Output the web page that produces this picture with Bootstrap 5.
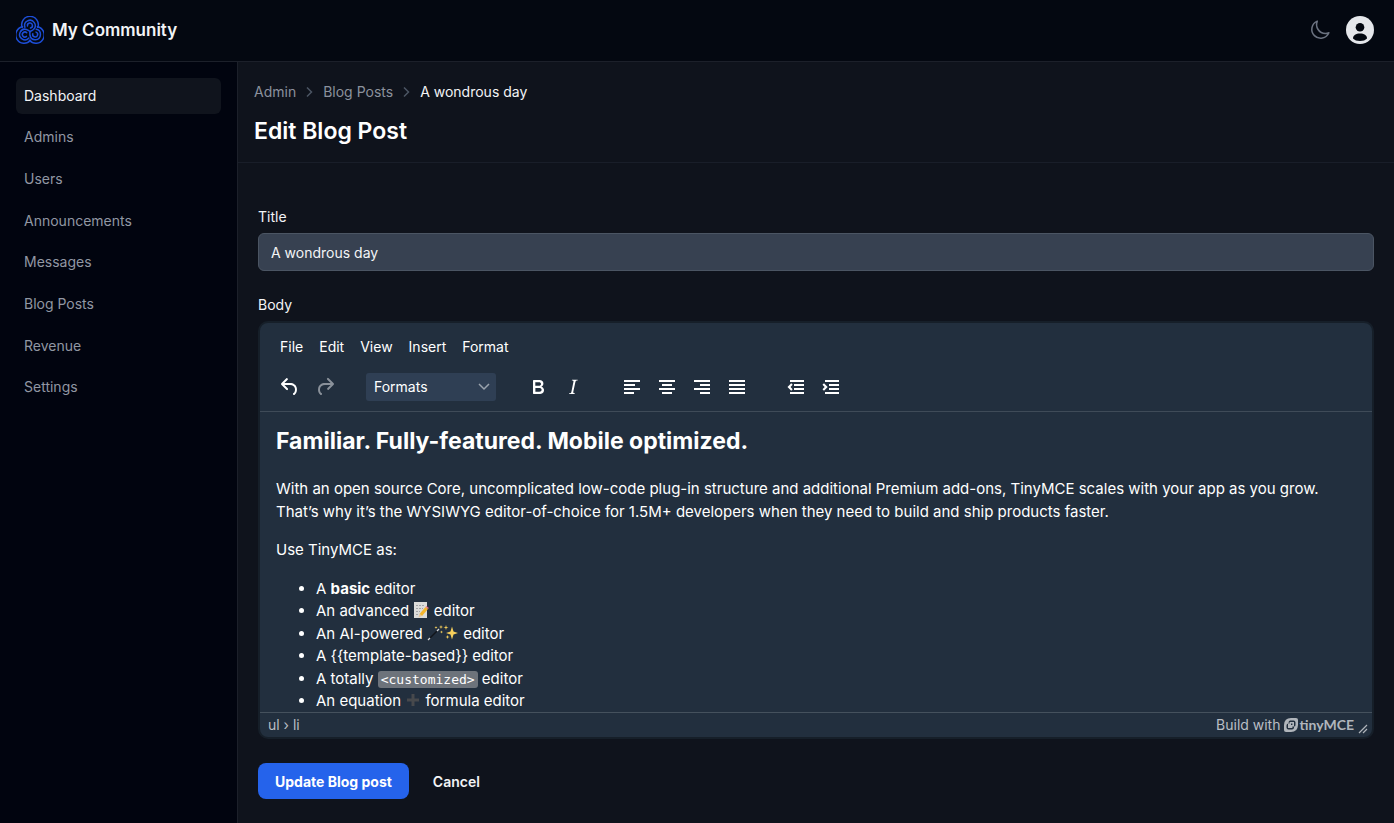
<!DOCTYPE html>
<html lang="en" data-bs-theme="dark">
<head>
<meta charset="utf-8">
<meta name="viewport" content="width=device-width, initial-scale=1">
<title>Edit Blog Post · My Community</title>
<link href="https://cdn.jsdelivr.net/npm/bootstrap@5.3.0/dist/css/bootstrap.min.css" rel="stylesheet">
<style>
  body { font-family: Inter, "Liberation Sans", sans-serif; font-size: 14px; line-height: 20px; background: #0f131c; color: #f3f4f6; }
  .topbar { height: 62px; padding-bottom: 2px; background: #040811; border-bottom: 1px solid #1c202a; }
  .brand { font-size: 17px; font-weight: 600; color: #f3f4f6; gap: 8px; }
  .sidebar { width: 238px; background: #01040f; border-right: 1px solid #1c202a; }
  .side-links { display: grid; grid-auto-rows: 1fr; gap: 6px; height: 327px; }
  .side-links a { display: flex; align-items: center; height: 100%; padding: 0 8px; border-radius: 6px; color: #9197a3; text-decoration: none; }
  .side-links a.active { background: #10141d; color: #f3f4f6; }
  .page-head { padding: 20px 16px 14px; border-bottom: 1px solid #191e29; }
  .crumbs { gap: 10px; }
  .crumbs a { color: #8b919d; text-decoration: none; }
  .page-title { font-size: 23px; line-height: 34px; font-weight: 600; }
  .page-body { padding: 44px 20px 24px; }
  .field-label { display: block; margin-bottom: 6px; }
  .title-input { height: 38px; padding: 0 12px; font-size: 14px; color: #f3f4f6; background: #374151; border: 1px solid #4b5563; border-radius: 6px; }
  .editor { background: #222f3e; border: 2px solid #161f29; border-radius: 10px; overflow: hidden; }
  .editor-head { padding: 10px 12px; gap: 12px; border-bottom: 1px solid #3f4b58; }
  .menu-item { height: 28px; padding: 0 8px; border: 0; background: none; color: #fff; }
  .tool-groups { gap: 24px; }
  .tool { width: 35px; height: 28px; padding: 0; border: 0; background: none; color: #fff; display: flex; align-items: center; justify-content: center; }
  .tool:disabled { color: #8a919a; }
  .tool svg { fill: currentColor; }
  .formats { width: 130px; height: 28px; padding: 0 8px; border: 0; border-radius: 3px; appearance: none; color: #fff; font-size: 14px;
    background: #2f3f54 url("data:image/svg+xml,%3Csvg xmlns='http://www.w3.org/2000/svg' width='12' height='8' fill='none' stroke='%239aa3ad' stroke-width='1.5'%3E%3Cpath d='M1 1l5 5 5-5'/%3E%3C/svg%3E") no-repeat right 6px center; }
  .doc { height: 300px; overflow: hidden; padding: 12px 16px 0; font-size: 15px; line-height: 1.5; color: #fff; }
  .doc h2 { font-size: 23px; font-weight: 700; line-height: 34px; margin-bottom: 20px; }
  .doc ul { padding-left: 40px; }
  .doc code { font: 13px/18px "DejaVu Sans Mono", monospace; color: #fff; background: #6d737b; border-radius: 3px; padding: 1px 3px; }
  .emoji { vertical-align: -2px; }
  .status { height: 25px; padding: 0 4px 0 8px; border-top: 1px solid #45515d; color: #b9bec4; }
  .tiny-word { font: 700 14px/20px Lato, sans-serif; color: #b0b5bb; margin-left: 1px; }
  .btn-save { height: 36px; padding: 0 17px; border-radius: 8px; background: #2563eb; color: #fff; font-size: 14px; font-weight: 700; }
  .btn-plain { height: 36px; padding: 0; color: #f3f4f6; font-size: 14px; font-weight: 600; }
</style>
</head>
<body>
<div class="min-vh-100 d-flex flex-column">
  <header class="topbar d-flex align-items-center justify-content-between px-3">
    <a href="#" class="brand d-flex align-items-center text-decoration-none">
      <svg width="28" height="28" viewBox="0 0 28 28" fill="none" stroke="#1d4ed8" stroke-width="1.500" stroke-linecap="round" aria-hidden="true">
        <g id="lobe"><path d="M6.200 11.500A8.300 8.300 0 1 1 21.800 11.500"/><path d="M8.900 11.300A5.300 5.300 0 1 1 17.500 13.500Q16 14.800 14 15.500"/><path d="M11.500 10A2.500 2.500 0 1 1 14.500 12"/></g>
        <use href="#lobe" transform="rotate(120 14 15.500)"/><use href="#lobe" transform="rotate(240 14 15.500)"/>
      </svg>
      <span>My Community</span>
    </a>
    <div class="d-flex align-items-center gap-3 pe-1">
      <button type="button" class="btn p-0 border-0 d-flex" aria-label="Toggle theme">
        <svg width="20" height="20" viewBox="0 0 22 22" fill="none" stroke="#6b7280" stroke-width="1.700" stroke-linejoin="round"><path d="M20.750 14a9.700 9.700 0 0 1-3.750.750A9.750 9.750 0 0 1 8 1.250a9.750 9.750 0 1 0 12.750 12.750z"/></svg>
      </button>
      <button type="button" class="btn p-0 border-0 d-flex" aria-label="Account">
        <svg width="28" height="28" viewBox="0 0 28 28"><circle cx="14" cy="14" r="14" fill="#e5e7eb"/><circle cx="14" cy="11.300" r="4.300" fill="#040811"/><path d="M7 22.500c0-3.400 3-5 7-5s7 1.600 7 5c-1.500 1.700-4 2.500-7 2.500s-5.500-.8-7-2.500z" fill="#040811"/></svg>
      </button>
    </div>
  </header>

  <div class="d-flex flex-grow-1">
    <nav class="sidebar flex-shrink-0 p-3" aria-label="Admin">
      <ul class="side-links list-unstyled mb-0">
        <li><a href="#" class="active">Dashboard</a></li>
        <li><a href="#">Admins</a></li>
        <li><a href="#">Users</a></li>
        <li><a href="#">Announcements</a></li>
        <li><a href="#">Messages</a></li>
        <li><a href="#">Blog Posts</a></li>
        <li><a href="#">Revenue</a></li>
        <li><a href="#">Settings</a></li>
      </ul>
    </nav>

    <main class="flex-grow-1">
      <div class="page-head">
        <nav class="crumbs d-flex align-items-center" aria-label="Breadcrumb">
          <a href="#">Admin</a>
          <svg width="7" height="12" viewBox="0 0 7 12" fill="none" stroke="#4b5563" stroke-width="1.500"><path d="M1 1.500L5.500 6 1 10.500"/></svg>
          <a href="#">Blog Posts</a>
          <svg width="7" height="12" viewBox="0 0 7 12" fill="none" stroke="#4b5563" stroke-width="1.500"><path d="M1 1.500L5.500 6 1 10.500"/></svg>
          <span aria-current="page">A wondrous day</span>
        </nav>
        <h1 class="page-title mb-0 mt-2 pt-1">Edit Blog Post</h1>
      </div>

      <form class="page-body">
        <label for="post-title" class="field-label">Title</label>
        <input id="post-title" type="text" class="title-input w-100 d-block" value="A wondrous day">

        <div class="field-label mt-4" id="body-label">Body</div>
        <div class="editor" role="group" aria-labelledby="body-label">
          <div class="editor-head d-flex flex-column">
            <div class="d-flex">
              <button type="button" class="menu-item">File</button>
              <button type="button" class="menu-item">Edit</button>
              <button type="button" class="menu-item">View</button>
              <button type="button" class="menu-item">Insert</button>
              <button type="button" class="menu-item">Format</button>
            </div>
            <div class="tool-groups d-flex">
              <div class="d-flex">
                <button type="button" class="tool" aria-label="Undo"><svg width="24" height="24"><path d="M6.400 8H12c3.700 0 6.200 2 6.800 5.100.6 2.700-.4 5.600-2.300 6.800a1 1 0 0 1-1-1.800c1.100-.6 1.800-2.700 1.400-4.600-.5-2.100-2.100-3.500-4.900-3.500H6.400l3.300 3.300a1 1 0 1 1-1.400 1.400l-5-5a1 1 0 0 1 0-1.400l5-5a1 1 0 0 1 1.400 1.400L6.400 8Z"/></svg></button>
                <button type="button" class="tool" aria-label="Redo" disabled><svg width="24" height="24"><path d="M17.600 10H12c-2.800 0-4.400 1.400-4.900 3.500-.4 2 .3 4 1.400 4.600a1 1 0 1 1-1 1.800c-2-1.200-2.900-4.100-2.300-6.800.6-3 3-5.100 6.800-5.100h5.600l-3.300-3.300a1 1 0 1 1 1.400-1.400l5 5a1 1 0 0 1 0 1.400l-5 5a1 1 0 0 1-1.400-1.400l3.300-3.300Z"/></svg></button>
              </div>
              <select class="formats" aria-label="Formats"><option>Formats</option></select>
              <div class="d-flex">
                <button type="button" class="tool" aria-label="Bold"><svg width="24" height="24"><path d="M7.800 19c-.3 0-.5 0-.6-.2l-.2-.5V5.700c0-.2 0-.4.2-.5l.6-.2h5c1.500 0 2.700.3 3.500 1 .7.6 1.100 1.400 1.100 2.500a3 3 0 0 1-.6 1.900c-.4.6-1 1-1.600 1.200.4.1.9.3 1.300.6s.8.7 1 1.200c.4.4.5 1 .5 1.600 0 1.300-.4 2.300-1.300 3-.8.7-2.100 1-3.800 1H7.800Zm5-8.300c.6 0 1.200-.1 1.600-.5.4-.3.6-.7.6-1.300 0-1.100-.8-1.700-2.300-1.700H9.300v3.500h3.400Zm.5 6c.7 0 1.300-.1 1.700-.4.4-.4.6-.9.6-1.500s-.2-1-.7-1.400c-.4-.3-1-.4-2-.4H9.400v3.800h4Z"/></svg></button>
                <button type="button" class="tool" aria-label="Italic"><svg width="24" height="24"><path d="m16.700 4.700-.1.900h-.3c-.6 0-1 0-1.400.3-.3.3-.4.6-.5 1.100l-2.100 9.800v.6c0 .5.4.8 1.400.8h.2l-.2.8H8l.2-.8h.2c1.100 0 1.800-.5 2-1.500l2-9.800.1-.5c0-.6-.4-.8-1.400-.8h-.3l.2-.9h5.800Z"/></svg></button>
              </div>
              <div class="d-flex">
                <button type="button" class="tool" aria-label="Align left"><svg width="24" height="24"><path d="M4 5h16v2H4zM4 9h11v2H4zM4 13h16v2H4zM4 17h10v2H4z"/></svg></button>
                <button type="button" class="tool" aria-label="Align center"><svg width="24" height="24"><path d="M4 5h16v2H4zM7 9h10v2H7zM4 13h16v2H4zM7 17h10v2H7z"/></svg></button>
                <button type="button" class="tool" aria-label="Align right"><svg width="24" height="24"><path d="M4 5h16v2H4zM10 9h10v2H10zM4 13h16v2H4zM10 17h10v2H10z"/></svg></button>
                <button type="button" class="tool" aria-label="Justify"><svg width="24" height="24"><path d="M4 5h16v2H4zM4 9h16v2H4zM4 13h16v2H4zM4 17h16v2H4z"/></svg></button>
              </div>
              <div class="d-flex">
                <button type="button" class="tool" aria-label="Decrease indent"><svg width="24" height="24"><path d="M6 5h14v2H6zM10 9h10v2H10zM10 13h10v2H10zM6 17h14v2H6zM7.200 8.200l1.500 1.500L6.500 12l2.200 2.300-1.500 1.500L3.500 12z"/></svg></button>
                <button type="button" class="tool" aria-label="Increase indent"><svg width="24" height="24"><path d="M6 5h14v2H6zM10 9h10v2H10zM10 13h10v2H10zM6 17h14v2H6zM5 8.200L3.500 9.700 5.700 12l-2.200 2.300L5 15.800 8.700 12z"/></svg></button>
              </div>
            </div>
          </div>

          <div class="doc">
            <h2>Familiar. Fully-featured. Mobile optimized.</h2>
            <p>With an open source Core, uncomplicated low-code plug-in structure and additional Premium add-ons, TinyMCE scales with your app as you grow. That’s why it’s the WYSIWYG editor-of-choice for 1.5M+ developers when they need to build and ship products faster.</p>
            <p>Use TinyMCE as:</p>
            <ul>
              <li>A <strong>basic</strong> editor</li>
              <li>An advanced <svg class="emoji" width="16" height="16" viewBox="0 0 16 16" role="img" aria-label="memo"><path fill="#dcdcda" d="M1 0h13v16H1z"/><path stroke="#a2a4a6" d="M3 3.500h9M3 6.500h7M3 9.500h4M3 12.500h3" stroke-dasharray="2 1"/><path fill="#f5b62c" d="M12.500 5l2.500 2-6 7-2.500-2z"/><path fill="#e8788a" d="M13.400 4l2.500 2-.9 1-2.500-2z"/><path fill="#e8c79c" d="M6.500 12L9 14l-3.500 1.500z"/></svg> editor</li>
              <li>An AI-powered <svg class="emoji" width="32" height="16" viewBox="0 0 32 16" role="img" aria-label="magic wand and sparkles"><path stroke="#11151a" stroke-width="1.400" d="M1 15L12 4"/><path stroke="#d7d9dc" stroke-width="1.400" d="M1 15l2-2M10 6l2-2"/><path fill="#f6cf5b" d="M14 0l.5 1.500 1.500.5-1.500.5L14 4l-.5-1.500L12 2l1.500-.5zM9 1l.4 1.100 1.100.4-1.100.4L9 4l-.4-1.100-1.100-.4 1.100-.4zM14.500 5.500l.4 1.100 1.100.4-1.100.4-.4 1.100-.4-1.100L13 7l1.100-.4zM25 1.500l1.500 5L31 8l-4.500 1.500-1.500 5-1.500-5L19 8l4.500-1.500zM19 0l.6 1.900 1.900.6-1.900.6L19 5l-.6-1.900-1.900-.6 1.900-.6zM20.500 10l.5 1.500 1.500.5-1.500.5-.5 1.500-.5-1.500-1.500-.5 1.500-.5z"/></svg> editor</li>
              <li>A {{template-based}} editor</li>
              <li>A totally <code>&lt;customized&gt;</code> editor</li>
              <li>An equation <svg class="emoji" width="16" height="16" viewBox="0 0 16 16" role="img" aria-label="plus"><path fill="#47494c" d="M6.500 2h3v4.500H14v3H9.500V14h-3V9.500H2v-3h4.500z"/></svg> formula editor</li>
            </ul>
          </div>

          <div class="status d-flex align-items-center">
            <span class="flex-grow-1">ul › li</span>
            <span class="me-1">Build with</span>
            <svg width="14" height="14" viewBox="0 0 14 14" aria-hidden="true"><path fill="#b0b5bb" d="M7 0h5q2 0 2 2v5q-.3 7-7 7H2q-2 0-2-2V7Q.3 0 7 0z"/><path fill="#222f3e" d="M6 2.600h3.500q2 0 2 2V7q0 1.500-1.500 1.500v1q0 2-2 2H4.500q-2 0-2-2V7.500q0-2 2-2 0-2.900 1.500-2.900z"/><path fill="#b0b5bb" fill-rule="evenodd" d="M5.600 4H10v4.400H8.400V10H4V5.600h1.600zM7 5.600v1.400h1.400V5.600z"/></svg>
            <span class="tiny-word">tinyMCE</span>
            <svg width="10" height="10" viewBox="0 0 10 10" class="ms-1 mt-2" stroke="#b0b5bb" stroke-width="1.200" aria-hidden="true"><path d="M1 9l8-8M5 9l4-4"/></svg>
          </div>
        </div>

        <div class="d-flex gap-4 mt-4">
          <button type="submit" class="btn btn-save border-0">Update Blog post</button>
          <button type="button" class="btn btn-plain border-0">Cancel</button>
        </div>
      </form>
    </main>
  </div>
</div>
<script src="https://cdn.jsdelivr.net/npm/bootstrap@5.3.0/dist/js/bootstrap.bundle.min.js"></script>
</body>
</html>
